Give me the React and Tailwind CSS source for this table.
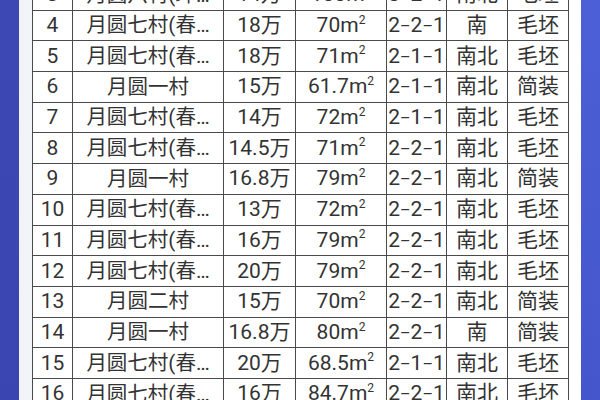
import React from "react";

const rows = [
  ["3", "月圆六村(环…", "14万", "100", "3-2-1", "南北", "毛坯"],
  ["4", "月圆七村(春…", "18万", "70", "2-2-1", "南", "毛坯"],
  ["5", "月圆七村(春…", "18万", "71", "2-1-1", "南北", "毛坯"],
  ["6", "月圆一村", "15万", "61.7", "2-1-1", "南北", "简装"],
  ["7", "月圆七村(春…", "14万", "72", "2-1-1", "南北", "毛坯"],
  ["8", "月圆七村(春…", "14.5万", "71", "2-2-1", "南北", "毛坯"],
  ["9", "月圆一村", "16.8万", "79", "2-2-1", "南北", "简装"],
  ["10", "月圆七村(春…", "13万", "72", "2-2-1", "南北", "毛坯"],
  ["11", "月圆七村(春…", "16万", "79", "2-2-1", "南北", "毛坯"],
  ["12", "月圆七村(春…", "20万", "79", "2-2-1", "南北", "毛坯"],
  ["13", "月圆二村", "15万", "70", "2-2-1", "南北", "简装"],
  ["14", "月圆一村", "16.8万", "80", "2-2-1", "南", "简装"],
  ["15", "月圆七村(春…", "20万", "68.5", "2-1-1", "南北", "毛坯"],
  ["16", "月圆七村(春…", "16万", "84.7", "2-2-1", "南北", "毛坯"],
];

function Cell({ i, c }) {
  if (i === 3) {
    return (
      <span>
        {c}m<sup className="text-[12px] -top-[0.7em]">2</sup>
      </span>
    );
  }
  if (i === 4) {
    // 户型: 室-厅-卫, dashes drawn a little longer than a hyphen
    const parts = c.split("-");
    return (
      <span>
        {parts.map((p, k) => (
          <React.Fragment key={k}>
            {k > 0 && <span className="text-[16px]">–</span>}
            {p}
          </React.Fragment>
        ))}
      </span>
    );
  }
  return <span>{c}</span>;
}

export default function App() {
  return (
    <div
      className="flex w-[600px] h-[400px] overflow-hidden bg-gradient-to-b from-[#3d48b4] to-[#3a45b2]"
      style={{ fontFamily: 'Roboto, "Noto Sans CJK SC", sans-serif' }}
    >
      <div className="w-[19px] shrink-0" />
      <div className="w-[562px] shrink-0 bg-gradient-to-r from-[#f2f3f8] via-white to-white pl-[13px] pr-[13px]">
        <div className="-mt-[21px] grid grid-cols-[40px_151px_72px_91px_60px_61px_61px] auto-rows-[30.7px] border-l-[1.5px] border-t-[1.5px] border-[#4a4a4a] bg-white text-[21px] leading-none text-[#333333]">
          {rows.map((r) =>
            r.map((c, i) => (
              <div
                key={r[0] + "-" + i}
                className={`flex items-center justify-center whitespace-nowrap border-r-[1.5px] border-b-[1.5px] border-[#4a4a4a] ${i === 1 ? "text-[20.5px]" : ""}`}
              >
                <Cell i={i} c={c} />
              </div>
            ))
          )}
        </div>
      </div>
      <div className="flex-1 bg-gradient-to-b from-[#4d5fd6] to-[#4556cc]" />
    </div>
  );
}
